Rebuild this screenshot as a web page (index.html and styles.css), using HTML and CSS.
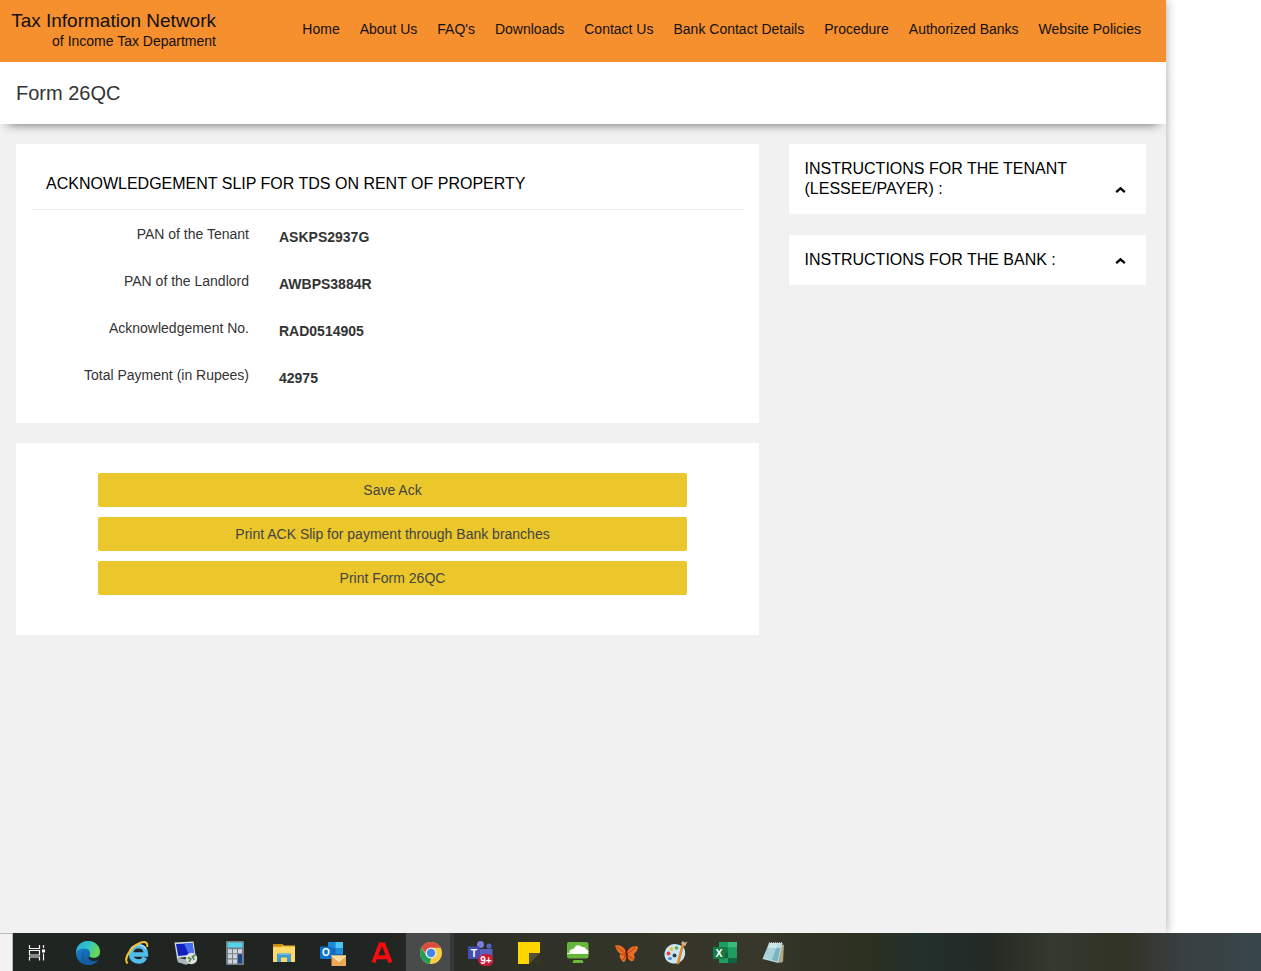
FILE: index.html
```html
<!DOCTYPE html>
<html lang="en">
<head>
<meta charset="utf-8">
<title>Form 26QC</title>
<link rel="stylesheet" href="styles.css">
</head>
<body>
<div class="screen">
  <div class="page">
    <header class="topbar">
      <div class="brand">
        <div class="brand-name">Tax Information Network</div>
        <div class="brand-sub">of Income Tax Department</div>
      </div>
      <nav class="nav">
        <a>Home</a><a>About Us</a><a>FAQ's</a><a>Downloads</a><a>Contact Us</a><a>Bank Contact Details</a><a>Procedure</a><a>Authorized Banks</a><a>Website Policies</a>
      </nav>
    </header>
    <div class="titlebar"><h1>Form 26QC</h1></div>
    <main class="content">
      <div class="main-col">
        <section class="card slip">
          <h2>ACKNOWLEDGEMENT SLIP FOR TDS ON RENT OF PROPERTY</h2>
          <dl class="fields">
            <dt>PAN of the Tenant</dt><dd>ASKPS2937G</dd>
            <dt>PAN of the Landlord</dt><dd>AWBPS3884R</dd>
            <dt>Acknowledgement No.</dt><dd>RAD0514905</dd>
            <dt>Total Payment (in Rupees)</dt><dd>42975</dd>
          </dl>
        </section>
        <section class="card actions">
          <button class="btn">Save Ack</button>
          <button class="btn">Print ACK Slip for payment through Bank branches</button>
          <button class="btn">Print Form 26QC</button>
        </section>
      </div>
      <aside class="side-col">
        <div class="card panel"><span>INSTRUCTIONS FOR THE TENANT<br>(LESSEE/PAYER) :</span>
          <svg class="chevron" viewBox="0 0 11 8"><path d="M1.2 6.2 5.5 2.3 9.8 6.2" fill="none" stroke="#000" stroke-width="2.300"/></svg></div>
        <div class="card panel"><span>INSTRUCTIONS FOR THE BANK :</span>
          <svg class="chevron" viewBox="0 0 11 8"><path d="M1.2 6.2 5.5 2.3 9.8 6.2" fill="none" stroke="#000" stroke-width="2.300"/></svg></div>
      </aside>
    </main>
  </div>
  <footer class="dock">
    <div class="dock-edge"></div>
    <div class="taskbar">
      <div class="task task-view"><svg viewBox="0 0 26 26"><g fill="none" stroke="#f4f4f4" stroke-width="1.2"><path d="M5.500 5v3.500h10V5M5.500 20.500V17h10v3.500M5.500 10.500h10v4.500h-10zM19.500 5v3M19.500 13.500v7"/></g><path fill="#fff" d="M18 9.500h3v3h-3z"/></svg></div>
      <div class="task"><svg viewBox="0 0 26 26">
        <defs><linearGradient id="edgeTop" x1="0" y1="0" x2="1" y2=".4"><stop stop-color="#2aa4dd"/><stop offset=".55" stop-color="#32c5c4"/><stop offset="1" stop-color="#6bd850"/></linearGradient><linearGradient id="edgeLow" x1="0" y1="0" x2=".7" y2="1"><stop stop-color="#1c8fdd"/><stop offset="1" stop-color="#104f91"/></linearGradient></defs>
        <circle cx="13" cy="13" r="12" fill="url(#edgeLow)"/>
        <path d="M1 12.500C1.400 5.500 6.500 1 13 1c7 0 12 5 12 10.500 0 4-3 6.300-6.500 6.300-3.200 0-4.600-1.300-3.900-2.500 2-3.300-1-6.800-5.200-6.700C5.500 8.700 2.200 10 1 12.500z" fill="url(#edgeTop)"/>
        <path d="M10 10.500c-3.400 3.500-1.300 9.500 4 11 3.500 1 6.800-.2 9.300-2.600.3.500-.2 1.300-.8 2-2.300 2.900-6.200 4.500-9.900 4C6 23.500 4.300 13.500 10 10.500z" fill="#165ca5"/>
        <path d="M14.500 15.500c-.7 1.500 1.200 2.500 3.900 2.600 2.500.1 4.300-.9 6.200-2.300l1.400 2-3.500 2.800c-1 .3-2 .4-3.400.4-4 .1-7-2.900-4.600-5.500z" fill="#202624"/>
      </svg></div>
      <div class="task"><svg viewBox="0 0 26 26">
        <path d="M21 17.500C19.500 20.700 17 21.500 14.500 21.500c-4.300 0-7.500-3-7.500-7.500s3.200-7.700 7.500-7.700 7.400 3.200 7.400 7.700v.5H8" fill="none" stroke="#52bdeb" stroke-width="4.600"/>
        <path d="M6 11c1.500-4.500 4.500-6 8.500-6s6 1.500 7.300 3.800" fill="none" stroke="#a4e3fa" stroke-width="1.600"/>
        <path d="M3.500 23.500C-1 18 8 5 18 2.300c3.700-1 6 .8 5.100 4.700" fill="none" stroke="#f5bf2c" stroke-width="2"/>
      </svg></div>
      <div class="task"><svg viewBox="0 0 26 26">
        <path d="M3.500 17.500 16 20l1.500 3-4.500 1.800-8-2.500z" fill="#afb7bb"/><path d="m1.500 2.500 19-1 2 14.500-18.500 2z" fill="#d6dce0"/><path d="m3 4 16.500-.8L21 14.500 5.200 16z" fill="#1022bd"/><path d="m11 3.600 8.500-.4L21 14.500l-5 .5z" fill="#476eef"/>
        <circle cx="18.500" cy="18.500" r="5.700" fill="#dddfda"/><path d="m14.800 17.500 3 1.600-2 2.900M22.300 15l-3 1.800 2 2.900" fill="none" stroke="#49844a" stroke-width="1.500"/>
      </svg></div>
      <div class="task"><svg viewBox="0 0 26 26">
        <rect x="4" y="1" width="18" height="24" rx="1" fill="#777e83"/><path d="M5.500 2.500h15v5h-15z" fill="#55d3e9"/>
        <path fill="#cdd6dd" d="M6 9.200h4v4H6zm5 0h4v4h-4zm5 0h4v4h-4zM6 14.300h4v4H6zm5 0h4v4h-4zM6 19.400h4v4H6zm5 0h4v4h-4z"/><path d="M16 14.300h4v9.100h-4z" fill="#164788"/>
      </svg></div>
      <div class="task"><svg viewBox="0 0 26 26">
        <path d="M2 4h9l2 1.500h11V22H2z" fill="#edb82d"/><path d="M2 7h22v15H2z" fill="#ffd968"/><path d="M2 4h9v2.500H2z" fill="#c78c10"/><path d="M6 13.500h14V22h-4v-4.500h-6V22H6z" fill="#439ace"/><path d="M7 13.500h12V15H7z" fill="#6cbddd"/>
      </svg></div>
      <div class="task"><svg viewBox="0 0 26 26">
        <path d="M8 2h15v16H8z" fill="#1269b7"/><path d="M8 2h7.500v6H8z" fill="#178ad5"/><path d="M15.500 2H23v6h-7.500z" fill="#4dc6f6"/><path d="M15.500 8H23v6h-7.500z" fill="#208ddc"/>
        <rect x="0" y="6.500" width="12" height="12.500" rx="1" fill="#0b73ce"/><text x="6" y="16.300" class="glyph" font-size="10">O</text>
        <path d="M11.500 15.500H26V26H11.500z" fill="#eda957"/><path d="m11.500 15.500 7.300 6 7.200-6z" fill="#ffd99a"/><path d="m11.500 15.500 7.300 6 7.200-6" fill="none" stroke="#fff0cc"/>
      </svg></div>
      <div class="task"><svg viewBox="0 0 26 26"><path d="M4.500 22.500 11.400 4.500h3.200l6.900 18M7 17.300h12" fill="none" stroke="#f50c0c" stroke-width="4"/></svg></div>
      <div class="task active"><svg viewBox="0 0 26 26">
        <circle cx="13" cy="13" r="11" fill="#f8cc43"/><path d="M3.500 7.500A11 11 0 0 1 22.600 7.700H13L9.400 15z" fill="#d94b3e"/><path d="M3.500 7.500 8.400 15.700 13 18.300 11.500 23.900A11 11 0 0 1 3.500 7.500z" fill="#249d58"/>
        <circle cx="13" cy="13" r="5.500" fill="#eee"/><circle cx="13" cy="13" r="4.200" fill="#4285e8"/>
      </svg></div>
      <div class="task"><svg viewBox="0 0 26 26">
        <circle cx="13.500" cy="4.500" r="3.500" fill="#7980dc"/><circle cx="22" cy="6" r="2.600" fill="#5961c3"/><path d="M10 9h15.500v8a6 6 0 0 1-6 5H16a6 6 0 0 1-6-6z" fill="#5861bd"/><path d="M1 6.500h12V19H1z" fill="#454db2"/><text x="7" y="16.500" class="glyph" font-size="10.500">T</text>
        <ellipse cx="19" cy="20" rx="8" ry="6.300" fill="#c91c37"/><text x="19" y="23.700" class="glyph" font-size="10">9+</text>
      </svg></div>
      <div class="task"><svg viewBox="0 0 26 26"><path d="M2 2h22v22H2z" fill="#ffd500"/><path d="M13 13h11v11H13z" fill="#353425"/><path d="M24 13 13 24V13z" fill="#57513a"/></svg></div>
      <div class="task"><svg viewBox="0 0 26 26">
        <rect x="2" y="2" width="21.500" height="16.500" rx="2" fill="#67b53b"/><path d="M5 13.500h16c3 0 3.500-3.500.2-4C20.500 7 18.300 6.500 17 7.300c-2.500-3.400-7.500-2.500-8 1.500C6 8.200 3 12 5 13.500z" fill="#fff"/><path d="M8.500 20h9l1 3h-11z" fill="#6bbc3b"/><path d="M2 13.500h21.500" stroke="#efffe7"/>
      </svg></div>
      <div class="task"><svg viewBox="0 0 26 26">
        <path d="M12 11C8 5 4 5 1 5.500c1 3 2 6 5.500 8.500-2 1.500 0 6 3 8 1 .5 2-1 3.200-6 1.800 3.500 3.600 6 6 5 2-1 2.500-4 1-7 3-1.500 4-4.500 4.300-7.500-5-1-9 1-11 5.500z" fill="#ed6d22"/><path d="m3 7 9 7m9-6-8 6M6.500 14l5.500 1-3 5m4-5 6 4" fill="none" stroke="#ae3513" stroke-width=".9"/><path d="m12 8 1 10" stroke="#5d1d0b" stroke-width="1.700"/>
      </svg></div>
      <div class="task"><svg viewBox="0 0 26 26">
        <path d="M15 4.500C7 2 1 9 1.500 15 2 22 9 25 15 23c4-1 8-6 7-12-.4-3.500-3-5.500-7-6.500z" fill="#c9e6f3"/><circle cx="11.500" cy="15.500" r="2" fill="#284653"/><circle cx="5.500" cy="13.500" r="2" fill="#de4739"/><circle cx="8.500" cy="9" r="1.900" fill="#efbf3e"/><circle cx="13.500" cy="8" r="1.800" fill="#64ac4b"/><ellipse cx="7" cy="18.500" rx="2" ry="1.500" fill="#4a8bd3"/>
        <path d="m21 5-4.500 18-2 2-.5-3.500L18.500 5z" fill="#e18a2d"/><path d="m18 4 1.500-3L22 2.500l2.500-1L22 6.500z" fill="#d3ae84"/>
      </svg></div>
      <div class="task"><svg viewBox="0 0 26 26">
        <path d="M7 2h18v21H7z" fill="#1f9c60"/><path d="M16 2h9v5.300h-9z" fill="#37bc7b"/><path d="M7 7.300h9v5.300H7z" fill="#147849"/><path d="M7 12.600h9V18H7zm9 5.400h9v5h-9z" fill="#126440"/><path d="M1 7h12v12H1z" fill="#137b43"/><text x="7" y="17" class="glyph" font-size="10.500">X</text>
      </svg></div>
      <div class="task"><svg viewBox="0 0 26 26">
        <path d="m19 4 4 1-1 17-4 1z" fill="#b4a77f"/><path d="M8 3h13.500l-4 20L1.500 19z" fill="#b9dee2"/><path d="M6.500 8h13l-3 13.500-13-3.300z" fill="#78b3bf"/><path d="M9 3h8l-6 17.500L3 18.500z" fill="#d9eff0" opacity=".5"/><path d="M8 3h14" stroke="#ddd" stroke-width="1.500" stroke-dasharray="1 1"/>
      </svg></div>
    </div>
  </footer>
</div>
</body>
</html>
```
FILE: styles.css
```css
* { box-sizing: border-box; }
body { margin: 0; background: #fff; color: #333; font: 14px/20px "Liberation Sans", Arial, sans-serif; }
.screen { height: 971px; display: flex; flex-direction: column; overflow: hidden; }
.page { width: 1166px; height: 933px; background: #f1f1f1; box-shadow: 0 0 10px rgba(0,0,0,.35); clip-path: inset(0 -15px 0 0); }
.topbar { height: 62px; background: #f68f2d; color: #111; display: flex; justify-content: space-between; padding: 10px 25px 0 11px; }
.brand { width: 205px; text-align: right; white-space: nowrap; }
.brand-name { font-size: 19px; line-height: 21px; }
.brand-sub { line-height: 20px; }
.nav { display: flex; gap: 20px; padding-top: 9px; white-space: nowrap; }
.titlebar { height: 62px; background: #fff; padding: 21px 16px; box-shadow: 0 8px 10px -8px rgba(0,0,0,.6); }
h1, h2, dl, dd { margin: 0; font-weight: 400; }
h1 { font-size: 20px; line-height: 20px; }
.content { display: flex; gap: 30px; padding: 20px 20px 0 16px; }
.main-col { width: 743px; display: flex; flex-direction: column; gap: 20px; }
.side-col { width: 357px; display: flex; flex-direction: column; gap: 21px; }
.card { background: #fff; }
.slip { height: 279px; padding: 15px 15px 0 16px; }
.slip h2 { height: 51px; padding: 15px 14px 14px; border-bottom: 1px solid #eee; color: #000; font-size: 16px; line-height: 20px; white-space: nowrap; }
.fields { display: grid; grid-template-columns: 217px 1fr; column-gap: 30px; grid-auto-rows: 47px; padding-top: 14px; }
.fields dt { text-align: right; }
.fields dd { font-weight: 700; padding-top: 3px; }
.actions { height: 192px; padding: 30px 72px 0 82px; display: flex; flex-direction: column; gap: 10px; }
.btn { height: 34px; border: 0; border-radius: 2px; background: #ebc72b; color: #444; font: inherit; }
.panel { display: flex; justify-content: space-between; align-items: flex-end; padding: 15px 20px 15px 15.500px; color: #000; font-size: 16px; line-height: 20px; white-space: nowrap; }
.chevron { width: 11px; height: 8px; margin-bottom: 5px; }
.dock { display: flex; height: 38px; }
.dock-edge { width: 13px; background: #f2f2f2; border-top: 1px solid #bbb; border-right: 1px solid #bbb; }
.taskbar { flex: 1; display: flex; background: linear-gradient(90deg, #1f2521 0, #202422 350px, #303227 520px, #38372b 740px, #303225 800px, #2b3020 860px, #24312b 900px, #222d2b 940px, #252a23 980px, #343a2f 1040px, #323225 1110px, #394043 1170px, #38464a 1248px); }
.task { width: 49px; height: 38px; display: flex; justify-content: center; padding-top: 7px; }
.task svg { width: 26px; height: 26px; }
.task-view { width: 50px; padding-right: 2px; }
.active { background: linear-gradient(90deg, #484b49 0 44px, #343735 44px 48px, transparent 48px); }
.glyph { font-family: "Liberation Sans", Arial, sans-serif; font-weight: 700; fill: #fff; text-anchor: middle; }
```
